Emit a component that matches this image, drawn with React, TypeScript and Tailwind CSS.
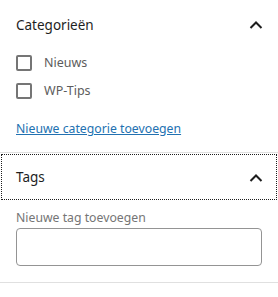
import { useState } from 'react';

function Chevron() {
  return (
    <svg width="24" height="24" viewBox="0 0 24 24" className="shrink-0">
      <path d="M6.5 15 12 9.5l5.5 5.5" fill="none" stroke="#1e1e1e" strokeWidth="2" />
    </svg>
  );
}

function Check({ label }: { label: string }) {
  const [on, setOn] = useState(false);
  return (
    <label className="flex items-center h-4 gap-3 cursor-pointer">
      <input
        type="checkbox"
        checked={on}
        onChange={() => setOn(!on)}
        className="appearance-none w-4 h-4 m-0 border-2 border-[#757575] rounded-[2px] bg-white"
      />
      <span className="text-[12.5px] text-[#5c5c5c]">{label}</span>
    </label>
  );
}

export default function App() {
  return (
    <div className="w-[278px] h-[297px] bg-white font-['Noto_Sans','Open_Sans',sans-serif] text-[#1e1e1e]">
      <div className="border-b border-[#e0e0e0]">
        <button className="w-full h-12 flex items-center justify-between pl-4 pr-[10px] pt-[2px] text-[13.5px] font-normal">
          <span>Categorieën</span>
          <Chevron />
        </button>
        <div className="px-4 pt-[7px] pb-[13px]">
          <div className="flex flex-col gap-3">
            <Check label="Nieuws" />
            <Check label="WP-Tips" />
          </div>
          <a href="#" className="block mt-[20px] text-[12.25px] leading-5 text-[#2271b1] underline">
            Nieuwe categorie toevoegen
          </a>
        </div>
      </div>
      <div className="border-b border-[#e0e0e0]">
        <button className="w-full h-12 flex items-center justify-between pl-4 pr-[10px] pt-[1px] text-[13.5px] font-normal outline outline-1 outline-dotted outline-[#1e1e1e] -outline-offset-2">
          <span>Tags</span>
          <Chevron />
        </button>
        <div className="px-4 pb-4">
          <div className="text-[12.25px] leading-5 text-[#757575] pt-[7px]">Nieuwe tag toevoegen</div>
          <input type="text" className="mt-0 block w-full h-[38px] border border-[#949494] rounded-[4px]" />
        </div>
      </div>
    </div>
  );
}
